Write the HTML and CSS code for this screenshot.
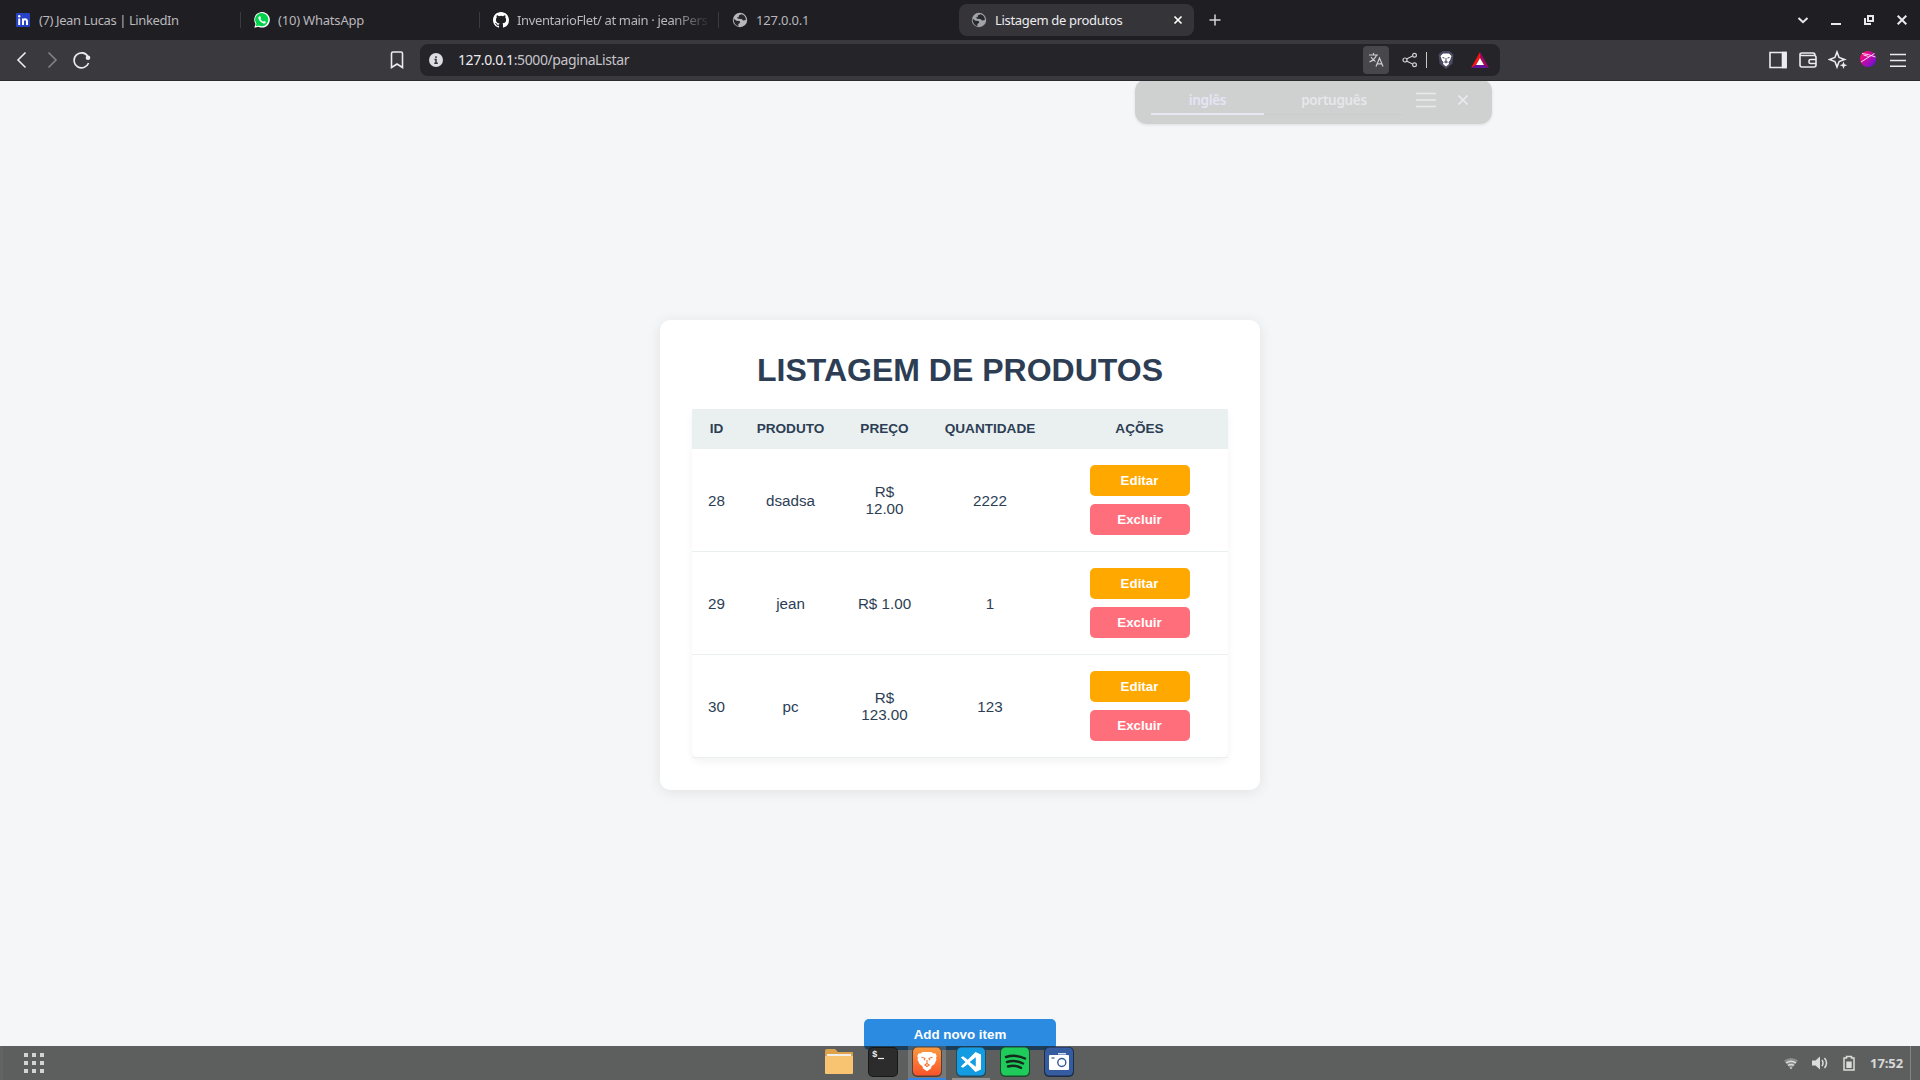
FILE: index.html
```html
<!DOCTYPE html>
<html lang="pt-BR">
<head>
<meta charset="utf-8">
<title>Listagem de produtos</title>
<link rel="stylesheet" href="styles.css">
</head>
<body>
<svg class="defs" width="0" height="0">
  <symbol id="globe" viewBox="0 0 16 16"><circle cx="8" cy="8" r="7.200" fill="currentColor"/><path class="land" d="M1.800 6.800 4.500 8.800 7.600 9l.6 1.700-1.900 1.200.2 2.300C3.500 13.500 1.300 10.500 1.800 6.800ZM9.500 2.200 7 3.200 6.600 5.200 4.700 5.500l1.400 1.300 3.300.2 1.800 1.600 2.700-.5C14 5 12.200 3 9.500 2.200Z"/></symbol>
</svg>
<header class="tabs">
  <div class="tab">
    <svg class="fav" viewBox="0 0 16 16"><rect x="1" y="1" width="14" height="14" rx="1" fill="#2742c4"/><path d="M4.200 6.500V13M8 13V6.500M8 9.500C8 6.500 12 6.500 12 9.300V13" fill="none" stroke="#fff" stroke-width="2"/><circle cx="4.200" cy="4.200" r="1.200" fill="#fff"/></svg>
    <span class="title t1">(7) Jean Lucas | LinkedIn</span>
  </div>
  <div class="tab">
    <svg class="fav" viewBox="0 0 16 16"><path d="M.3 15.700 1.500 12A7.800 7.800 0 1 1 4.500 14.700Z" fill="#fff"/><path d="m1.700 14.300.8-2.600A6.600 6.600 0 1 1 4.700 13.500Z" fill="#00d24b"/><path d="M5.500 4.200 6.500 4.500 7 6.200 6.400 7Q7.500 9 9.200 9.700L10 8.900l1.800.9c.1 1.700-1.400 2-2.300 1.700C6.700 10.700 5 8.500 4.400 6.600 4.200 5.500 4.700 4.500 5.500 4.200Z" fill="#fff"/></svg>
    <span class="title t2">(10) WhatsApp</span>
  </div>
  <div class="tab">
    <svg class="fav" viewBox="0 0 16 16"><path fill="#fff" d="M8 0C3.580 0 0 3.580 0 8c0 3.540 2.290 6.530 5.470 7.590.4.070.55-.17.55-.38 0-.19-.01-.82-.01-1.490-2.010.37-2.530-.49-2.690-.94-.09-.23-.48-.94-.82-1.130-.28-.15-.68-.52-.01-.53.63-.01 1.080.58 1.230.82.72 1.210 1.870.87 2.330.66.07-.52.28-.87.51-1.070-1.780-.2-3.640-.89-3.640-3.950 0-.87.31-1.590.82-2.150-.08-.2-.36-1.020.08-2.120 0 0 .67-.21 2.200.82a7.600 7.600 0 0 1 4 0c1.530-1.040 2.200-.82 2.200-.82.44 1.100.16 1.920.08 2.120.51.56.82 1.270.82 2.150 0 3.070-1.870 3.750-3.650 3.950.29.25.54.73.54 1.480 0 1.070-.01 1.930-.01 2.200 0 .21.150.46.55.38A8 8 0 0 0 16 8c0-4.420-3.580-8-8-8Z"/></svg>
    <span class="title t3 fade">InventarioFlet/ at main · jeanPers</span>
  </div>
  <div class="tab plain">
    <svg class="fav globe"><use href="#globe"/></svg>
    <span class="title t4">127.0.0.1</span>
  </div>
  <div class="tab active">
    <svg class="fav globe"><use href="#globe"/></svg>
    <span class="title t5">Listagem de produtos</span>
    <svg class="close" viewBox="0 0 10 10"><path d="m1.500 1.500 7 7m0-7-7 7"/></svg>
  </div>
  <svg class="plus" viewBox="0 0 12 12"><path d="M6 .5v11M.5 6h11"/></svg>
  <div class="winctl">
    <svg viewBox="0 0 12 12"><path d="M1.500 4 6 8.200 10.500 4"/></svg>
    <svg viewBox="0 0 12 12"><path d="M1 10h10"/></svg>
    <svg viewBox="0 0 12 12"><path d="M5 2h5v5H5ZM2 4v6h6"/></svg>
    <svg viewBox="0 0 12 12"><path d="m1.700 1.700 8.600 8.600m0-8.600-8.600 8.600"/></svg>
  </div>
</header>
<nav class="toolbar">
  <div class="nav">
    <svg viewBox="0 0 20 20"><path d="m13.500 2.500-7.500 7.500 7.500 7.500"/></svg>
    <svg class="dim" viewBox="0 0 20 20"><path d="m6.500 2.500 7.500 7.500-7.500 7.500"/></svg>
    <svg viewBox="0 0 20 20"><path d="M15.800 6.200A7.500 7.500 0 1 0 16.600 13"/><circle cx="16" cy="7.700" r="2.300" class="dot"/></svg>
  </div>
  <svg class="bookmark" viewBox="0 0 20 20"><path d="M4.500 3.500q0-1.500 1.500-1.500h8q1.500 0 1.500 1.500V17.500L10 14l-5.500 3.500Z"/></svg>
  <div class="url">
    <svg class="info" viewBox="0 0 14 14"><circle cx="7" cy="7" r="7" fill="#dddce2"/><path d="M7 3.200v1.700M5.500 6.500H7v3.700M5.300 10.300h3.500" stroke="#333238" stroke-width="1.500" fill="none"/></svg>
    <span class="addr"><b>127.0.0.1</b>:5000/paginaListar</span>
    <span class="translate"><svg viewBox="0 0 16 16"><path d="M1 3h9M5.500 1v2M8.500 3Q7 7.500 1.500 10M3 5q2 3.500 4.500 4.500M8 14.500 11.500 6 15 14.500M9.200 11.800h4.600"/></svg></span>
    <svg class="share" viewBox="0 0 16 16"><path d="m4.500 7 6-3M4.500 9l6 3"/><circle cx="3" cy="8" r="2"/><circle cx="12.500" cy="3.300" r="1.900"/><circle cx="12.500" cy="12.700" r="1.900"/></svg>
    <i class="bar"></i>
    <svg class="shield" viewBox="0 0 16 18"><path d="m4.500 0 7 0 4 3.500-1 9L8 18 1.500 12.500.5 3.500Z" fill="#4a4963"/><path d="m5 2.500 6 0 2.500 2.500L12 9.500 10.500 11 11 13 8 15.500 5 13l.5-2L4 9.500 2.500 5Z" fill="#fff"/><path d="m4.500 6.500 2 .5m5-.5-2 .5M8 7v3L6.500 11 8 12 9.500 11 8 10" fill="none" stroke="#4a4963"/></svg>
    <svg class="bat" viewBox="0 0 18 16"><path d="M9 0v6L5 13 0 16Z" fill="#ff1413"/><path d="m9 0 9 16-5-3-4-7Z" fill="#a3085c"/><path d="m0 16 5-3h8l5 3Z" fill="#66139b"/><path d="m9 6 4 7H5Z" fill="#fff"/></svg>
  </div>
  <div class="actions">
    <svg viewBox="0 0 20 20"><path d="M2 2.500h16v15H2Z"/><path class="fill" d="M14.500 2.500H18v15h-3.500Z"/></svg>
    <svg viewBox="0 0 20 20"><path d="M2 4.500V15q0 2 2 2h12q2 0 2-2V7.500q0-2-2-2H4Q2 5.500 2 4.500 2 3 4 3h11q2 0 2 2.500M18 9.500h-5.500q-1.500 0-1.500 1.500v1q0 1.500 1.500 1.500H18"/></svg>
    <svg viewBox="0 0 20 20"><path d="M9 2 11.100 7.500 16.500 9.500 11.100 11.500 9 17 6.900 11.500 1.500 9.500 6.900 7.500Z"/><path class="fill spark" d="m15.500 11.500 1 2.800 2.800 1-2.800 1-1 2.700-1-2.700-2.800-1 2.800-1Z"/></svg>
    <svg viewBox="0 0 20 20"><defs><linearGradient id="orb" x1="0" y1="0" x2="1" y2="1"><stop offset=".2" stop-color="#f5097d"/><stop offset="1" stop-color="#5a10ee"/></linearGradient></defs><circle class="spark" cx="10" cy="9" r="8" fill="url(#orb)"/><path class="thin" d="M3 12 16.500 3.500M4 3.500Q10 4 17.500 7M10.500 6.500 5.500 5"/></svg>
    <svg viewBox="0 0 20 20"><path d="M2 4.500h16M2 10.500h16M2 16.300h16"/></svg>
  </div>
</nav>
<main class="page">
  <section class="card">
    <h1>LISTAGEM DE PRODUTOS</h1>
    <table>
      <colgroup><col class="c1"><col class="c2"><col class="c3"><col class="c4"><col class="c5"></colgroup>
      <thead><tr><th>ID</th><th>PRODUTO</th><th>PREÇO</th><th>QUANTIDADE</th><th>AÇÕES</th></tr></thead>
      <tbody>
        <tr><td>28</td><td>dsadsa</td><td>R$ 12.00</td><td>2222</td><td><div class="ops"><button class="edit">Editar</button><button class="del">Excluir</button></div></td></tr>
        <tr><td>29</td><td>jean</td><td>R$ 1.00</td><td>1</td><td><div class="ops"><button class="edit">Editar</button><button class="del">Excluir</button></div></td></tr>
        <tr><td>30</td><td>pc</td><td>R$ 123.00</td><td>123</td><td><div class="ops"><button class="edit">Editar</button><button class="del">Excluir</button></div></td></tr>
      </tbody>
    </table>
  </section>
  <button class="add">Add novo item</button>
</main>
<aside class="translator">
  <span class="lang on">inglês</span><span class="lang">português</span>
  <svg class="tmenu" viewBox="0 0 20 16"><path d="M0 1.500h20M0 8h20M0 14.500h20"/></svg>
  <svg class="tclose" viewBox="0 0 10 10"><path d="m.5.500 9 9m0-9-9 9"/></svg>
</aside>
<footer class="taskbar">
  <svg class="grid" viewBox="0 0 20 20"><path d="M0 2h20M0 10h20M0 18h20"/></svg>
  <div class="apps">
    <span class="app"><svg viewBox="0 0 32 32"><path d="M2 5q0-2 2-2h8l3 3h14q1 0 1 1v8H2Z" fill="#dfa24c"/><path d="M4 8h24v4H4Z" fill="#f2eee8"/><path d="M2 10h28v17q0 1-1 1H3q-1 0-1-1Z" fill="#f8c471"/></svg></span>
    <span class="app"><svg viewBox="0 0 32 32"><rect x="1" y="1" width="30" height="30" rx="5" fill="#171717"/><rect x="2" y="2" width="28" height="28" rx="4" fill="#2c2c2c"/><text x="5" y="10.500" class="prompt">$</text><path d="M11 12.500h6" stroke="#eee" stroke-width="1.200"/></svg></span>
    <span class="app current"><svg viewBox="0 0 32 32"><defs><linearGradient id="lion" x2="0" y2="1"><stop stop-color="#f99a3d"/><stop offset="1" stop-color="#fb542b"/></linearGradient></defs><rect x="1" y="1" width="30" height="30" rx="5" fill="#51413a"/><rect x="2" y="1.500" width="28" height="28" rx="4.500" fill="url(#lion)"/><path d="m11.500 6 9 0 1.500 1.200 2.500.3 1.200 2.500-.7 2 .5 1.500-2 4.500-3 2.300-.5 2.200-4 2.700-4-2.700-.5-2.200-3-2.300-2-4.500.5-1.500-.7-2L7.500 7.500 10 7.200Z" fill="#fff"/><path d="m10.500 11.300 3.500 1-.8 2M21.500 11.300l-3.500 1 .8 2M16 14v3.500l-2.200 1.500L16 20.500l2.200-1.500L16 17.500" fill="none" stroke="#f77335" stroke-width="1.100"/></svg></span>
    <span class="app open"><svg viewBox="0 0 32 32"><rect x="1" y="1" width="30" height="30" rx="5" fill="#244a60"/><rect x="2" y="1.500" width="28" height="28" rx="4.500" fill="#149ce3"/><path fill-rule="evenodd" d="M20.500 6 26 8.500v15L20.500 26 12.800 18.200 8 21.800 5.800 20.600 10.500 16 5.800 11.400 8 10.200l4.800 3.600ZM20.800 11.200 14.700 16l6.100 4.800Z" fill="#fff"/></svg></span>
    <span class="app"><svg viewBox="0 0 32 32"><rect x="1" y="1" width="30" height="30" rx="5" fill="#1d4c2d"/><rect x="2" y="1.500" width="28" height="28" rx="4.500" fill="#1ecb5b"/><path d="M7 11q10-3 19 1.500M8 16q8-2.500 16 1.500M9 20.500q7-2 13 1.300" fill="none" stroke="#152b1c" stroke-width="2.500" stroke-linecap="round"/></svg></span>
    <span class="app"><svg viewBox="0 0 32 32"><rect x="1" y="1" width="30" height="30" rx="5" fill="#1d2b47"/><rect x="2" y="1.500" width="28" height="28" rx="4.500" fill="#345c9e"/><rect x="6" y="9" width="20" height="15" rx="1" fill="#fff"/><path d="M15 7.800h8" stroke="#fff" stroke-width="1.200"/><path d="M8.500 12h3" stroke="#315896" stroke-width="1.200"/><circle cx="18.800" cy="16.500" r="4" fill="#fff" stroke="#315896" stroke-width="1.400"/></svg></span>
  </div>
  <div class="tray">
    <svg viewBox="0 0 16 16"><path d="M1 5.500Q8 .5 15 5.500L8 14Z" fill="#8b8c8b"/><path d="M3 8Q8 4.500 13 8M5 10.500q3-2 6 0" fill="none" stroke="#dcdcda" stroke-width="1.500"/><path d="M6.500 12.500h3L8 14.300Z" fill="#dcdcda"/></svg>
    <svg viewBox="0 0 16 16"><path d="M0 5.500h3.500L8 1.500v13L3.500 10.500H0Z" fill="#dcdcda"/><path d="M10 5q2 3 0 6M12.500 3q4 5 0 10" fill="none" stroke="#dcdcda" stroke-width="1.500"/></svg>
    <svg viewBox="0 0 16 16"><path d="M3 3h2.500V1.500h5V3H13v12H3Z" fill="none" stroke="#dcdcda" stroke-width="1.500"/><path d="M5.300 6.500h5.400v6.500H5.300Z" fill="#dcdcda"/></svg>
    <span class="clock">17:52</span>
    <i class="edge"></i>
  </div>
</footer>
</body>
</html>
```
FILE: styles.css
```css
* { box-sizing: border-box; }
body { margin: 0; height: 1080px; overflow: hidden; display: grid; grid-template-rows: 40px 41px 965px 34px; background: #f4f6f8; font-family: "Liberation Sans", Arial, sans-serif; position: relative; }
svg { display: block; flex: none; fill: none; stroke: none; }
.defs { position: absolute; }

.tabs { background: #1f1e23; display: flex; align-items: center; font: 13px "Noto Sans", sans-serif; color: #b9b8bd; }
.tab { width: 240px; flex: none; height: 16px; display: flex; align-items: center; padding-left: 15px; border-right: 1px solid #3b3a3f; white-space: nowrap; }
.tab:first-child { width: 241px; }
.tab:nth-child(2) { width: 239px; padding-left: 13px; }
.tab:nth-child(3) { padding-left: 13px; width: 239px; }
.tab.plain { border: 0; padding-left: 13px; }
.fav { width: 16px; height: 16px; margin-right: 8px; }
.land { fill: #29282d; }
.globe { color: #b8b7b9; }
.title { letter-spacing: -.2px; }
.title.t1 { letter-spacing: -.4px; }
.title.t3 { letter-spacing: -.36px; }
.title.t5 { letter-spacing: -.32px; }
.fade { -webkit-mask-image: linear-gradient(90deg, #000 82%, rgba(0,0,0,.1)); mask-image: linear-gradient(90deg, #000 82%, rgba(0,0,0,.1)); }
.tab.active { width: 235px; height: 32px; background: #353438; border: 0; border-radius: 8px; padding: 0 11px 0 12px; color: #ececef; }
.active .globe { color: #a0a4a8; }
.close { width: 10px; height: 10px; margin-left: auto; stroke: #fff; stroke-width: 1.700; }
.plus { width: 12px; height: 12px; margin-left: 15px; stroke: #d5d4d8; stroke-width: 1.500; }
.winctl { margin-left: auto; display: flex; gap: 21px; padding-right: 12px; }
.winctl svg { width: 12px; height: 12px; stroke: #e9e8ed; stroke-width: 2; }

.toolbar { position: relative; z-index: 2; background: #3a393d; border-bottom: 1px solid #2b2a2e; display: flex; align-items: center; }
.toolbar > * { flex: none; }
.nav { display: flex; gap: 10px; padding-left: 12px; width: 387px; }
.nav svg, .bookmark, .actions svg { width: 20px; height: 20px; stroke: #ececf0; stroke-width: 1.600; }
.nav .dim { stroke: #838287; }
.nav .dot { fill: #ececf0; stroke: none; }
.url { margin-left: 13px; width: 1080px; height: 32px; border-radius: 8px; background: #252429; display: flex; align-items: center; padding: 0 11px 0 9px; }
.info { width: 14px; height: 14px; }
.addr { margin: -2px 0 0 15px; font: 14px "Noto Sans", sans-serif; color: #c5c4c9; letter-spacing: -.4px; }
.addr b { font-weight: 400; color: #ececf0; }
.translate { margin-left: auto; width: 26px; height: 28px; border-radius: 4px; background: #48474c; display: grid; place-items: center; }
.translate svg, .share { width: 16px; height: 16px; stroke: #cfced3; stroke-width: 1.200; }
.share { margin-left: 13px; }
.bar { width: 1px; height: 16px; background: #c8c7cc; margin: 0 11px 0 8px; }
.shield { width: 16px; height: 18px; }
.bat { width: 18px; height: 16px; margin-left: 17px; }
.actions { margin-left: auto; display: flex; gap: 10px; padding-right: 12px; }
.actions .fill { fill: #ececf0; }
.actions .spark { stroke: none; }
.actions .thin { stroke: #ffd5f1; stroke-width: 1; }

.page { display: grid; grid-template-rows: 938px 31px; justify-items: center; overflow: visible; }
.card { width: 600px; height: 470px; align-self: start; margin-top: 239px; background: #fff; border-radius: 10px; padding: 32px; box-shadow: 0 2px 14px rgba(0,0,0,.085); }
h1 { margin: 0 0 20px; font-size: 32px; line-height: 37px; text-align: center; color: #2d3e54; }
table { width: 536px; table-layout: fixed; border-collapse: separate; border-spacing: 0; border-radius: 8px; box-shadow: 0 4px 8px rgba(0,0,0,.05); font-size: 15.200px; line-height: 17px; text-align: center; color: #2d3e54; }
.c1 { width: 49px; } .c2 { width: 99px; } .c3 { width: 89px; } .c4 { width: 122px; } .c5 { width: 177px; }
th { height: 40px; padding: 0 0 1px; background: #eaf0f0; font-size: 13.600px; }
td { height: 103px; padding: 0 15px; border-bottom: 1px solid #eaeff0; }
.ops { display: flex; flex-direction: column; align-items: center; gap: 8px; }
button { border: 0; padding: 0; height: 31px; border-radius: 5px; color: #fff; font: bold 13.333px "Liberation Sans", Arial, sans-serif; }
.ops button { width: 100px; }
.edit { background: #ffa800; }
.del { background: #ff6f7b; }
.add { width: 192px; background: #2b8be0; }

.translator { position: absolute; left: 1135px; top: 79px; width: 357px; height: 45px; padding: 0 24px 0 16px; background: rgba(193,194,194,.72); border-radius: 12px; display: flex; align-items: flex-start; box-shadow: 0 1px 3px rgba(0,0,0,.1); }
.lang { width: 113px; height: 36px; text-align: center; font: 600 13.500px/43px "Noto Sans", sans-serif; letter-spacing: -.3px; color: #e6e7ea; border-bottom: 1px solid #cbccd0; }
.lang.on { color: #e5e4f5; border-bottom: 2px solid #e8e8f5; }
.lang + .lang { width: 140px; }
.tmenu { width: 20px; height: 16px; margin: 13px 0 0 12px; stroke: #e9eaec; stroke-width: 1.700; }
.tclose { width: 10px; height: 10px; margin: 16px 0 0 auto; stroke: #e9eaec; stroke-width: 1.600; }

.taskbar { position: relative; background: rgba(21,24,22,.68); display: grid; grid-template-columns: 1fr auto 1fr; align-items: center; border-left: 3px solid rgba(110,114,112,.3); }
.grid { width: 20px; height: 20px; margin-left: 21px; stroke: #d4d5d3; stroke-width: 4; stroke-dasharray: 4 4; }
.apps { display: flex; gap: 6px; margin-right: 26px; }
.app { width: 38px; height: 34px; padding: 0 3px; }
.app svg { width: 32px; height: 32px; }
.prompt { font: bold 9px "Liberation Mono", monospace; fill: #eee; }
.current { background: rgba(255,255,255,.16); box-shadow: inset 0 -2px #3584e4; }
.open { box-shadow: inset 0 -2px #929392; }
.tray { display: flex; align-items: center; justify-content: flex-end; gap: 13px; }
.tray svg { width: 16px; height: 16px; }
.clock { font: bold 13px "Noto Sans", sans-serif; letter-spacing: -.1px; color: #d8d9d7; }
.edge { width: 10px; height: 34px; border-left: 1px solid #838583; margin-left: -6px; }
```
